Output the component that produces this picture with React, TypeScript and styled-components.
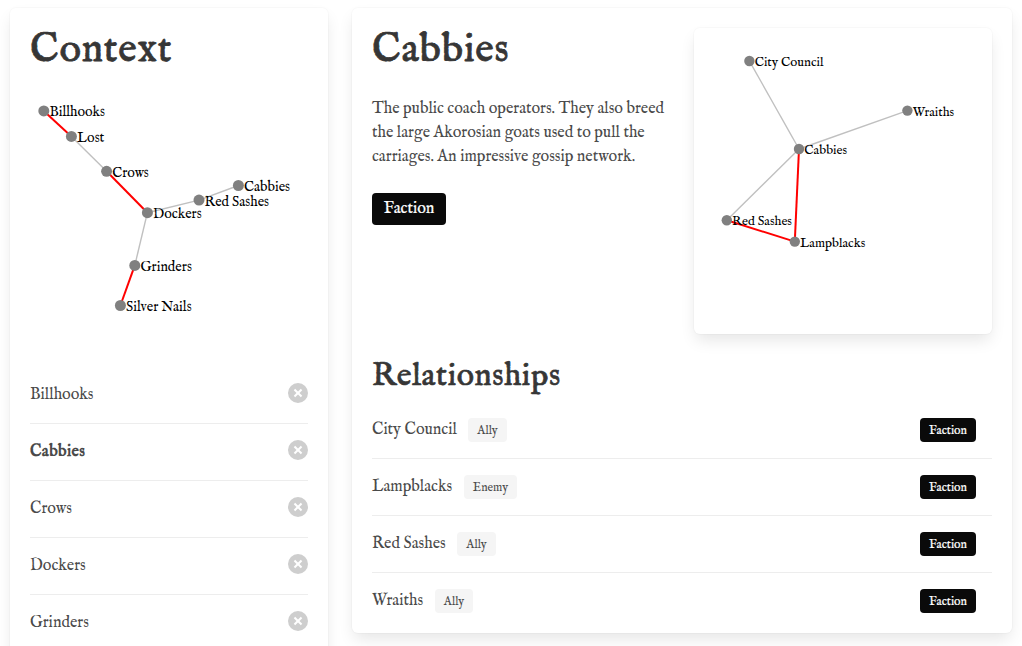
import React from "react";
import styled, { createGlobalStyle } from "styled-components";

const GlobalStyle = createGlobalStyle`
  *, *::before, *::after { box-sizing: border-box; }
  html, body { margin: 0; padding: 0; background: #fff; overflow: hidden; }
  body {
    font-family: "IM Fell English", "EB Garamond", "Liberation Serif", serif;
    font-size: 16px;
    line-height: 24px;
    color: #4a4a4a;
  }
`;

const Page = styled.main`
  display: flex;
  align-items: flex-start;
  gap: 24px;
  height: 100vh;
  padding: 8px 10px 0;
  overflow: hidden;
`;

const Box = styled.section`
  background: #fff;
  border-radius: 6px;
  padding: 20px;
  box-shadow: 0 8px 16px -2px rgba(10, 10, 10, 0.1), 0 0 0 1px rgba(10, 10, 10, 0.02);
`;

const ContextBox = styled(Box)`
  flex: 0 0 318px;
  height: 700px;
`;

const DetailBox = styled(Box)`
  flex: 1;
  height: 625px;
`;

const GraphBox = styled(Box)`
  padding: 0;
  height: 306px;
`;

const Title = styled.h1`
  margin: 0;
  height: 57px;
  font-size: 40px;
  line-height: 45px;
  font-weight: 500;
  -webkit-text-stroke: 0.8px #363636;
  color: #363636;
  letter-spacing: 0.85px;
`;

const Subtitle = styled.h2`
  margin: 20px 0 0;
  height: 48px;
  font-size: 32px;
  line-height: 46px;
  font-weight: 500;
  -webkit-text-stroke: 0.7px #363636;
  color: #363636;
  letter-spacing: 0.65px;
`;

const Columns = styled.div`
  display: grid;
  grid-template-columns: 1fr 1fr;
  column-gap: 24px;
`;

const Description = styled.p`
  margin: 12px 0 24px;
  white-space: nowrap;
`;

const Row = styled.div`
  display: flex;
  align-items: flex-start;
  height: 57px;
  padding-top: 16px;
  border-bottom: 1px solid #ededed;
  &:last-child { border-bottom-color: transparent; }
`;

const RelationRow = styled(Row)`
  padding-right: 16px;
`;

const Name = styled.span<{ $active?: boolean; $width?: number }>`
  flex: none;
  width: ${(p) => (p.$width ? `${p.$width}px` : "auto")};
  font-weight: ${(p) => (p.$active ? 700 : 400)};
  letter-spacing: ${(p) => (p.$active ? "0.4px" : "normal")};
  white-space: nowrap;
`;

const Tag = styled.span<{ $dark?: boolean; $large?: boolean; $width: number }>`
  display: inline-flex;
  justify-content: center;
  flex: none;
  width: ${(p) => p.$width}px;
  height: ${(p) => (p.$large ? 32 : 24)}px;
  border-radius: 4px;
  font-size: ${(p) => (p.$large ? 16 : 12)}px;
  line-height: ${(p) => (p.$large ? 32 : 26)}px;
  background: ${(p) => (p.$dark ? "#0a0a0a" : "#f5f5f5")};
  color: ${(p) => (p.$dark ? "#fff" : "#4a4a4a")};
  -webkit-text-stroke: ${(p) => (p.$dark ? "0.2px #fff" : "0")};
`;

const Spacer = styled.span`
  flex: 1;
`;

const DeleteButton = styled.button`
  display: grid;
  place-items: center;
  width: 20px;
  height: 20px;
  padding: 0;
  border: 0;
  border-radius: 50%;
  background: rgba(10, 10, 10, 0.2);
  transform: rotate(45deg);
  &::before, &::after {
    content: "";
    grid-area: 1 / 1;
    background: #fff;
  }
  &::before { width: 10px; height: 2px; }
  &::after { width: 2px; height: 10px; }
`;

const GraphSvg = styled.svg`
  display: block;
`;

type GraphNode = { name: string; x: number; y: number };
type Link = [number, number, boolean];

const contextNodes: GraphNode[] = [
  { name: "Billhooks", x: 43.8, y: 110.9 },
  { name: "Lost", x: 71.4, y: 136.4 },
  { name: "Crows", x: 106.6, y: 171.3 },
  { name: "Dockers", x: 147.4, y: 212.7 },
  { name: "Red Sashes", x: 199, y: 200.1 },
  { name: "Cabbies", x: 238.4, y: 185.5 },
  { name: "Grinders", x: 134.8, y: 265.4 },
  { name: "Silver Nails", x: 120.4, y: 305.5 },
];
const contextLinks: Link[] = [
  [0, 1, true], [1, 2, false], [2, 3, true], [3, 4, false],
  [4, 5, false], [3, 6, false], [6, 7, true],
];

const factionNodes: GraphNode[] = [
  { name: "City Council", x: 749.4, y: 61 },
  { name: "Wraiths", x: 907.4, y: 110.6 },
  { name: "Cabbies", x: 799, y: 149 },
  { name: "Red Sashes", x: 726.8, y: 220.3 },
  { name: "Lampblacks", x: 794.8, y: 241.6 },
];
const factionLinks: Link[] = [
  [0, 2, false], [1, 2, false], [2, 3, false], [2, 4, true], [3, 4, true],
];

type GraphProps = {
  nodes: GraphNode[];
  links: Link[];
  origin: [number, number];
  width: number;
  height: number;
  radius: number;
  fontSize: number;
  labelDrop: number;
};

function Graph({ nodes, links, origin, width, height, radius, fontSize, labelDrop }: GraphProps) {
  return (
    <GraphSvg width={width} height={height} viewBox={`${origin[0]} ${origin[1]} ${width} ${height}`}>
      {links.map(([a, b, hostile]) => (
        <line
          key={`${a}-${b}`}
          x1={nodes[a].x}
          y1={nodes[a].y}
          x2={nodes[b].x}
          y2={nodes[b].y}
          stroke={hostile ? "#ff0000" : "#c0c0c0"}
          strokeWidth={hostile ? 2 : 1.4}
        />
      ))}
      {nodes.map((n) => (
        <g key={n.name}>
          <circle cx={n.x} cy={n.y} r={radius} fill="#808080" />
          <text x={n.x + radius + 0.1} y={n.y + labelDrop} fontSize={fontSize} fill="#000">
            {n.name}
          </text>
        </g>
      ))}
    </GraphSvg>
  );
}

const members = ["Billhooks", "Cabbies", "Crows", "Dockers", "Grinders"];

const relations = [
  { name: "City Council", kind: "Ally", nameWidth: 96, tagWidth: 39 },
  { name: "Lampblacks", kind: "Enemy", nameWidth: 92, tagWidth: 53 },
  { name: "Red Sashes", kind: "Ally", nameWidth: 85, tagWidth: 39 },
  { name: "Wraiths", kind: "Ally", nameWidth: 63, tagWidth: 38 },
];

export default function App() {
  return (
    <>
      <GlobalStyle />
      <Page>
        <ContextBox>
          <Title>Context</Title>
          <Graph
            nodes={contextNodes}
            links={contextLinks}
            origin={[30, 85]}
            width={278}
            height={282}
            radius={5.5}
            fontSize={14}
            labelDrop={5.5}
          />
          {members.map((name) => (
            <Row key={name}>
              <Name $active={name === "Cabbies"}>{name}</Name>
              <Spacer />
              <DeleteButton aria-label={`Remove ${name}`} />
            </Row>
          ))}
        </ContextBox>
        <DetailBox>
          <Columns>
            <div>
              <Title>Cabbies</Title>
              <Description>
                The public coach operators. They also breed
                <br />
                the large Akorosian goats used to pull the
                <br />
                carriages. An impressive gossip network.
              </Description>
              <Tag $dark $large $width={74}>Faction</Tag>
            </div>
            <GraphBox>
              <Graph
                nodes={factionNodes}
                links={factionLinks}
                origin={[694, 28]}
                width={298}
                height={306}
                radius={5.2}
                fontSize={13}
                labelDrop={4.95}
              />
            </GraphBox>
          </Columns>
          <Subtitle>Relationships</Subtitle>
          {relations.map((r) => (
            <RelationRow key={r.name}>
              <Name $width={r.nameWidth}>{r.name}</Name>
              <Tag $width={r.tagWidth}>{r.kind}</Tag>
              <Spacer />
              <Tag $dark $width={56}>Faction</Tag>
            </RelationRow>
          ))}
        </DetailBox>
      </Page>
    </>
  );
}
